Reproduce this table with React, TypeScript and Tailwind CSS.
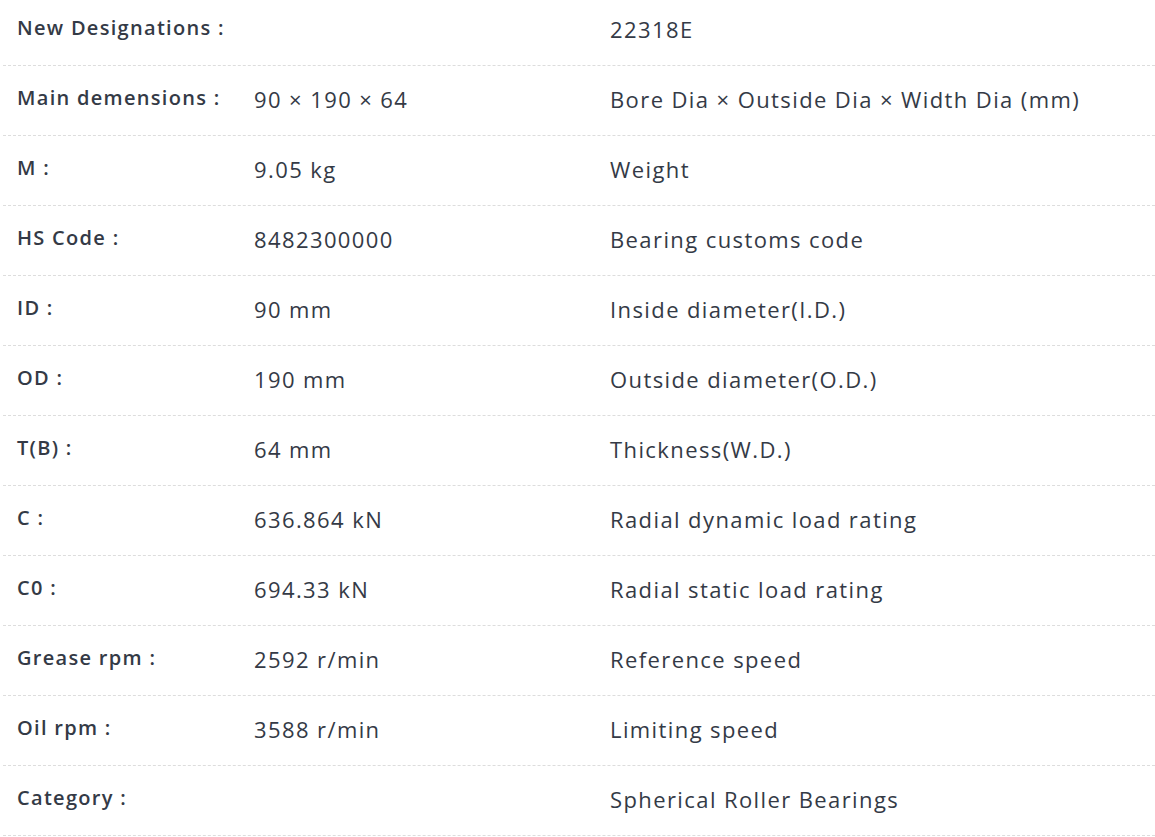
const rows: { label: string; value: string; note: string }[] = [
  { label: "New Designations :", value: "", note: "22318E" },
  { label: "Main demensions :", value: "90 × 190 × 64", note: "Bore Dia × Outside Dia × Width Dia (mm)" },
  { label: "M :", value: "9.05 kg", note: "Weight" },
  { label: "HS Code :", value: "8482300000", note: "Bearing customs code" },
  { label: "ID :", value: "90 mm", note: "Inside diameter(I.D.)" },
  { label: "OD :", value: "190 mm", note: "Outside diameter(O.D.)" },
  { label: "T(B) :", value: "64 mm", note: "Thickness(W.D.)" },
  { label: "C :", value: "636.864 kN", note: "Radial dynamic load rating" },
  { label: "C0 :", value: "694.33 kN", note: "Radial static load rating" },
  { label: "Grease rpm :", value: "2592 r/min", note: "Reference speed" },
  { label: "Oil rpm :", value: "3588 r/min", note: "Limiting speed" },
  { label: "Category :", value: "", note: "Spherical Roller Bearings" },
];

export default function App() {
  return (
    <div className="h-[837px] w-[1155px] overflow-hidden bg-white pl-[3px] font-['Open_Sans',sans-serif] text-[#343a46]">
      <div className="-mt-[4px]">
        {rows.map((row) => (
          <div
            key={row.label}
            className="flex h-[70px] items-center border-b border-dashed border-[#dddddd]"
          >
            <div className="w-[237px] pb-[5px] pl-[14px] text-[20px] font-semibold tracking-[1.3px]">
              {row.label}
            </div>
            <div className="w-[356px] pb-[2px] pl-[14px] text-[22px] tracking-[1.4px]">{row.value}</div>
            <div className="flex-1 pb-[2px] pl-[14px] text-[22px] tracking-[1.4px]">{row.note}</div>
          </div>
        ))}
      </div>
    </div>
  );
}
